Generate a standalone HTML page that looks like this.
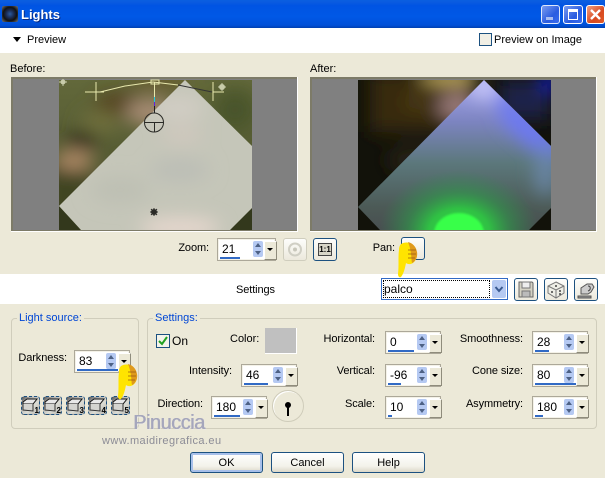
<!DOCTYPE html>
<html><head><meta charset="utf-8"><style>
html,body{margin:0;padding:0;width:605px;height:478px;overflow:hidden;background:#ece9d8;font-family:"Liberation Sans",sans-serif;font-size:11px;color:#000}
div,span,svg{position:absolute;box-sizing:border-box}
.t{white-space:nowrap;line-height:13px}
.r{text-align:right;white-space:nowrap;line-height:13px;letter-spacing:-.1px}
.sp{width:56px;height:23px;background:#fff;border:1px solid #aca899;box-shadow:inset 0 0 0 1px #f4f2e8}
.sp b{position:absolute;left:4px;top:3px;font-weight:normal;font-size:12px;line-height:14px}
.sp i{position:absolute;display:block;left:2px;bottom:1px;height:2px;background:#316ac5}
.sp u{position:absolute;display:block;left:31px;top:2px;width:10px;height:16px;background:#b5c9f2;border-radius:2px}
.sp u:before{content:"";position:absolute;left:2px;top:2px;border:3px solid transparent;border-top:0;border-bottom:4px solid #4d6185}
.sp u:after{content:"";position:absolute;left:2px;top:10px;border:3px solid transparent;border-bottom:0;border-top:4px solid #4d6185}
.sp s{position:absolute;display:block;left:43px;top:2px;width:11px;height:17px;background:#ece9d8;border-right:1px solid #8f8c7c;border-bottom:1px solid #8f8c7c;border-top:1px solid #fff;border-left:1px solid #fff}
.sp s:after{content:"";position:absolute;left:2px;top:6px;border:3px solid transparent;border-bottom:0;border-top:3px solid #000}
.btn{height:21px;border:1px solid #1c5180;border-radius:3px;background:linear-gradient(#fff,#f3f2ea 70%,#dcd8c8);text-align:center;line-height:20px;font-size:11px}
.ib{width:24px;height:23px;border:1px solid #1c5180;border-radius:3px;background:linear-gradient(#fdfdfb,#ece9dc)}
.grp{border:1px solid #d0cdbc;border-radius:4px}
.leg{color:#0046d5;background:#ece9d8;padding:0 2px;line-height:13px;white-space:nowrap}
.ls{width:19px;height:19px;border:1px dashed #1c5180;border-radius:3px;background:linear-gradient(135deg,#555 0,#aaa 25%,#dcdcd4 60%,#b4b4b0 100%)}
.ls b{position:absolute;right:0;bottom:-1px;font-size:8px;line-height:9px;color:#000}
.ls svg{left:0;top:0}
</style></head><body>

<div style="left:0;top:0;width:605px;height:28px;background:linear-gradient(#0a5fe0 0,#0a5ae0 8%,#0054e3 20%,#0058e6 60%,#0050d8 90%,#0040b0 100%)"></div>
<div style="left:2px;top:6px;width:16px;height:16px;background:radial-gradient(circle at 50% 50%,#2a5aa0 0,#1a2a50 35%,#111 60%,#777 100%);border-radius:2px"></div>
<div class="t" style="left:21px;top:7px;color:#fff;font-weight:bold;font-size:13px;line-height:16px;text-shadow:1px 1px 0 #0a2a80">Lights</div>
<div style="left:541px;top:5px;width:19px;height:19px;border:1px solid #dfe8fb;border-radius:3px;background:linear-gradient(135deg,#7b9cf0,#2a5ce0 60%,#3a6cf0)"><div style="left:4px;top:11px;width:7px;height:3px;background:#a9bdf0"></div></div>
<div style="left:563px;top:5px;width:20px;height:19px;border:1px solid #fff;border-radius:3px;background:linear-gradient(135deg,#7b9cf0,#2a5ce0 60%,#3a6cf0)"><div style="left:4px;top:3px;width:10px;height:11px;border:1px solid #fff;border-top:3px solid #fff"></div></div>
<div style="left:586px;top:5px;width:19px;height:19px;border:1px solid #fff;border-radius:3px;background:linear-gradient(135deg,#f0a080,#d84a20 60%,#e05a28)"><svg width="17" height="17" style="left:0;top:0"><path d="M4 4L13 13M13 4L4 13" stroke="#fff" stroke-width="2.4"/></svg></div>

<div style="left:0;top:28px;width:605px;height:25px;background:#fff"></div>
<div style="left:13px;top:37px;border:4.5px solid transparent;border-bottom:0;border-top:5px solid #000"></div>
<div class="t" style="left:27px;top:34px">Preview</div>
<div style="left:479px;top:33px;width:13px;height:13px;border:1px solid #1c5180;background:#f1efe5"></div>
<div class="t" style="left:494px;top:34px">Preview on Image</div>

<div class="t" style="left:10px;top:63px">Before:</div>
<div class="t" style="left:310px;top:63px">After:</div>

<svg width="605" height="240" style="left:0;top:0" viewBox="0 0 605 240">
<defs>
<filter id="b1" x="-60%" y="-60%" width="220%" height="220%"><feGaussianBlur stdDeviation="9"/></filter>
<filter id="b3" x="-20%" y="-20%" width="140%" height="140%"><feGaussianBlur stdDeviation="1"/></filter>
<clipPath id="c1"><rect x="59" y="80" width="193" height="150"/></clipPath>
<clipPath id="c2"><rect x="358" y="80" width="193" height="150"/></clipPath>
<clipPath id="d1"><path d="M185 80L252 146V208L230 230H81L59 206Z"/></clipPath>
<clipPath id="d2"><path d="M484 80L551 146V208L529 230H380L358 207Z"/></clipPath>
<linearGradient id="g1" x1="0" y1="0" x2="0" y2="1"><stop offset="0" stop-color="#62683a"/><stop offset="1" stop-color="#484e2c"/></linearGradient>
<linearGradient id="g2" gradientUnits="userSpaceOnUse" x1="0" y1="80" x2="0" y2="230"><stop offset="0" stop-color="#a8a8f0"/><stop offset=".28" stop-color="#7c84c0"/><stop offset=".55" stop-color="#5c787c"/><stop offset=".85" stop-color="#4c5a56"/><stop offset="1" stop-color="#484e50"/></linearGradient>
<radialGradient id="gr" gradientUnits="userSpaceOnUse" cx="0" cy="0" r="1" gradientTransform="translate(459 232) scale(80 62)"><stop offset="0" stop-color="#33e045"/><stop offset=".38" stop-color="#30c044"/><stop offset=".65" stop-color="#2f9a4a" stop-opacity=".6"/><stop offset="1" stop-color="#2f8a50" stop-opacity="0"/></radialGradient>
</defs>
<rect x="11" y="77" width="287" height="155" fill="#fff"/>
<rect x="11" y="77" width="286" height="154" fill="#7d7b68"/>
<rect x="13" y="79" width="284" height="151" fill="#808080"/>
<rect x="310" y="77" width="287" height="155" fill="#fff"/>
<rect x="310" y="77" width="286" height="154" fill="#7d7b68"/>
<rect x="312" y="79" width="284" height="151" fill="#808080"/>

<g clip-path="url(#c1)">
<rect x="59" y="80" width="193" height="150" fill="url(#g1)"/>
<g filter="url(#b1)">
<ellipse cx="68" cy="195" rx="25" ry="35" fill="#3f4424"/>
<ellipse cx="120" cy="104" rx="26" ry="11" fill="#54401c"/>
<ellipse cx="150" cy="112" rx="24" ry="14" fill="#a88c74"/>
<ellipse cx="160" cy="82" rx="30" ry="7" fill="#6a5a2a"/>
<ellipse cx="82" cy="141" rx="16" ry="9" fill="#2a2616"/>
<ellipse cx="74" cy="160" rx="20" ry="9" fill="#b8906c"/>
<ellipse cx="100" cy="122" rx="20" ry="12" fill="#70703c"/>
<ellipse cx="235" cy="110" rx="22" ry="22" fill="#48542c"/>
</g>
<path d="M59 206V230H81Z" fill="#33381c"/>
<path d="M252 208V230H230Z" fill="#33381c"/>
<path d="M185 80L252 146V208L230 230H81L59 206Z" fill="#c5c6b9"/>
<g clip-path="url(#d1)"><g filter="url(#b1)">
<ellipse cx="178" cy="108" rx="26" ry="12" fill="#d2cdc4"/>
<ellipse cx="182" cy="135" rx="20" ry="9" fill="#d0c8be"/>
<ellipse cx="180" cy="170" rx="30" ry="12" fill="#bcbeb6"/>
<ellipse cx="120" cy="190" rx="30" ry="14" fill="#bec0b4"/>
<ellipse cx="180" cy="228" rx="40" ry="10" fill="#e8d8cf"/>
</g></g>
</g>

<g clip-path="url(#c2)">
<rect x="358" y="80" width="193" height="150" fill="#12120a"/>
<g filter="url(#b1)">
<rect x="370" y="72" width="105" height="60" fill="#382a0c"/>
<ellipse cx="450" cy="76" rx="30" ry="7" fill="#d0b868"/>
<ellipse cx="458" cy="106" rx="20" ry="14" fill="#9a7a78"/>
<ellipse cx="418" cy="102" rx="14" ry="9" fill="#4c3a12"/>
<ellipse cx="415" cy="160" rx="28" ry="14" fill="#282014"/>
<rect x="500" y="80" width="50" height="40" fill="#1c2448"/>
<ellipse cx="551" cy="82" rx="9" ry="9" fill="#0a1ad0"/>
</g>
<path d="M484 80L551 146V208L529 230H380L358 207Z" fill="url(#g2)"/>
<g clip-path="url(#d2)">
<g filter="url(#b1)">
<path d="M490 80L565 146L550 165L505 125Z" fill="#6c78f4"/>
<ellipse cx="484" cy="88" rx="14" ry="8" fill="#d4d4fc"/>
<ellipse cx="545" cy="170" rx="10" ry="26" fill="#6a86a8"/>
</g>
<ellipse cx="459" cy="232" rx="80" ry="62" fill="url(#gr)"/>
<g filter="url(#b3)"><ellipse cx="459" cy="234" rx="25" ry="21" fill="#38ff48"/></g>
</g>
</g>

<!-- light controls -->
<g fill="none" stroke="#e8e8ae" stroke-width="1">
<path d="M85 92H104M96 82V101M213 92H224M213 82V101"/>
<path d="M100 92L125 86L153 82L178 85"/>
<path d="M151 80H159V84H151Z"/>
<path d="M154.500 82V97"/>
</g>
<path d="M178 85L212 92" stroke="#333" fill="none"/>
<path d="M154.500 97V102" stroke="#20d0e0"/>
<path d="M154.500 102V106" stroke="#6020e0"/>
<path d="M154.500 106V113" stroke="#222"/>
<g fill="none" stroke="#2a2a26"><circle cx="154" cy="122.500" r="9.500"/><path d="M145 122.500H164M154.500 122.500V132"/></g>
<g fill="#2a2a26"><circle cx="154" cy="212" r="3"/><path d="M150 212H158M154 208V216M151 209L157 215M157 209L151 215" stroke="#2a2a26"/></g>
<g fill="#c8ccaa"><circle cx="222" cy="87" r="3"/><path d="M218 87H226M222 83V91" stroke="#c8ccaa"/></g>
<g fill="#c8ccaa"><circle cx="63" cy="82" r="2.500"/><path d="M59 82H67M63 79V86" stroke="#c8ccaa"/></g>
</svg>

<!-- zoom row -->
<div class="r" style="left:170px;width:39px;top:242px">Zoom:</div>
<div class="sp" style="left:217px;top:238px;width:59px"><b>21</b><i style="width:20px"></i><u style="left:35px"></u><s style="left:46px"></s></div>
<div class="ib" style="left:283px;top:238px;border-color:#cfcdbd"><svg width="22" height="21" style="left:0;top:0"><circle cx="11" cy="10.500" r="6" fill="none" stroke="#d0cfc4" stroke-width="2"/><circle cx="11" cy="10.500" r="2" fill="#c8c7bb"/></svg></div>
<div class="ib" style="left:313px;top:238px"><div style="left:4px;top:4px;width:14px;height:13px;background:#d8d6c8;border:1px solid #444;font-size:8px;font-weight:bold;line-height:11px;text-align:center">1:1</div></div>
<div class="r" style="left:360px;width:35px;top:242px">Pan:</div>
<div class="ib" style="left:401px;top:237px"></div>

<!-- settings band -->
<div style="left:0;top:274px;width:605px;height:30px;background:#fff"></div>
<div class="t" style="left:236px;top:284px;letter-spacing:-.1px">Settings</div>
<div style="left:381px;top:278px;width:127px;height:22px;border:1px solid #316ac5;background:#fff"><div style="left:1px;top:1px;width:107px;height:18px;border:1px dotted #000"></div><div class="t" style="left:2px;top:4px;font-size:12px">palco</div><div style="left:110px;top:1px;width:14px;height:18px;background:#b5c9f2;border-radius:2px"><svg width="14" height="18" style="left:0;top:0"><path d="M3.500 7L7 11L10.500 7" fill="none" stroke="#3a5a90" stroke-width="2"/></svg></div></div>
<div class="ib" style="left:514px;top:278px"><svg width="22" height="21" style="left:0;top:0"><path d="M4 3H17L18 4V18H4Z" fill="#d4d2c4" stroke="#666"/><path d="M7 3H15V9H7Z" fill="#eee" stroke="#777"/><path d="M7 12H15V18H7Z" fill="#bbb" stroke="#777"/></svg></div>
<div class="ib" style="left:544px;top:278px"><svg width="22" height="21" style="left:0;top:0"><path d="M11 3L19 7V14L11 19L3 14V7Z" fill="#eeeee6" stroke="#777"/><path d="M3 7L11 11L19 7M11 11V19" fill="none" stroke="#777"/><circle cx="11" cy="7" r="1" fill="#444"/><circle cx="7" cy="13" r="1" fill="#444"/><circle cx="15" cy="12" r="1" fill="#444"/><circle cx="15" cy="15" r="1" fill="#444"/></svg></div>
<div class="ib" style="left:574px;top:278px"><svg width="22" height="21" style="left:0;top:0"><path d="M3 17H16V19H3Z" fill="#999" stroke="#555"/><path d="M6 15V9L12 5H17L19 8L16 13L13 15Z" fill="#ccc" stroke="#555"/><path d="M13 7C16 7 16 11 13 12" fill="none" stroke="#444"/></svg></div>

<!-- group boxes -->
<div class="grp" style="left:11px;top:318px;width:128px;height:111px"></div>
<div class="leg" style="left:17px;top:312px">Light source:</div>
<div class="grp" style="left:147px;top:318px;width:450px;height:111px"></div>
<div class="leg" style="left:153px;top:312px">Settings:</div>

<div class="r" style="left:10px;width:57px;top:352px">Darkness:</div>
<div class="sp" style="left:74px;top:350px"><b>83</b><i style="width:44px"></i><u></u><s></s></div>

<div class="ls" style="left:21px;top:396px"><svg width="17" height="17"><path d="M1 5L5 2H15L11 7H1Z" fill="#e8e8e8" stroke="#111"/><path d="M1 7V13L11 14V7" fill="#d4d4d0" stroke="#333"/></svg><b>1</b></div>
<div class="ls" style="left:43px;top:396px"><svg width="17" height="17"><path d="M1 5L5 2H15L11 7H1Z" fill="#e8e8e8" stroke="#111"/><path d="M1 7V13L11 14V7" fill="#d4d4d0" stroke="#333"/></svg><b>2</b></div>
<div class="ls" style="left:66px;top:396px"><svg width="17" height="17"><path d="M1 5L5 2H15L11 7H1Z" fill="#e8e8e8" stroke="#111"/><path d="M1 7V13L11 14V7" fill="#d4d4d0" stroke="#333"/></svg><b>3</b></div>
<div class="ls" style="left:88px;top:396px"><svg width="17" height="17"><path d="M1 5L5 2H15L11 7H1Z" fill="#e8e8e8" stroke="#111"/><path d="M1 7V13L11 14V7" fill="#d4d4d0" stroke="#333"/></svg><b>4</b></div>
<div class="ls" style="left:111px;top:396px"><svg width="17" height="17"><path d="M1 5L5 2H15L11 7H1Z" fill="#e8e8e8" stroke="#111"/><path d="M1 7V13L11 14V7" fill="#d4d4d0" stroke="#333"/></svg><b>5</b></div>

<div style="left:156px;top:334px;width:14px;height:14px;border:1px solid #1c5180;background:#f4f3ea"><svg width="12" height="12" style="left:0;top:0"><path d="M2 6L5 9L10 2" fill="none" stroke="#21a121" stroke-width="2"/></svg></div>
<div class="t" style="left:172px;top:335px;font-size:12px">On</div>
<div class="t" style="left:230px;top:333px">Color:</div>
<div style="left:265px;top:328px;width:32px;height:26px;background:#c0c0c0;border-right:1px solid #fff;border-bottom:1px solid #fff"></div>

<div class="r" style="left:170px;width:62px;top:365px">Intensity:</div>
<div class="sp" style="left:241px;top:364px"><b>46</b><i style="width:24px"></i><u></u><s></s></div>
<div class="r" style="left:150px;width:53px;top:398px">Direction:</div>
<div class="sp" style="left:211px;top:396px"><b>180</b><i style="width:26px"></i><u></u><s></s></div>
<div style="left:272px;top:390px;width:32px;height:32px;border-radius:50%;border:1px solid #cfccba;background:#ece9d8;box-shadow:inset 1px 1px 0 #fff"><svg width="30" height="30" style="left:0;top:0"><circle cx="15" cy="14" r="3" fill="#000"/><path d="M15 14V25" stroke="#000" stroke-width="2"/></svg></div>

<div class="r" style="left:310px;width:65px;top:333px">Horizontal:</div>
<div class="sp" style="left:385px;top:331px"><b>0</b><i style="width:26px"></i><u></u><s></s></div>
<div class="r" style="left:310px;width:65px;top:365px">Vertical:</div>
<div class="sp" style="left:385px;top:364px"><b>-96</b><i style="width:13px"></i><u></u><s></s></div>
<div class="r" style="left:310px;width:65px;top:398px">Scale:</div>
<div class="sp" style="left:385px;top:396px"><b>10</b><i style="width:4px"></i><u></u><s></s></div>

<div class="r" style="left:440px;width:83px;top:333px">Smoothness:</div>
<div class="sp" style="left:532px;top:331px"><b>28</b><i style="width:14px"></i><u></u><s></s></div>
<div class="r" style="left:440px;width:83px;top:365px">Cone size:</div>
<div class="sp" style="left:532px;top:364px"><b>80</b><i style="width:48px"></i><u></u><s></s></div>
<div class="r" style="left:440px;width:83px;top:398px">Asymmetry:</div>
<div class="sp" style="left:532px;top:396px"><b>180</b><i style="width:8px"></i><u></u><s></s></div>

<div class="btn" style="left:190px;top:452px;width:73px;box-shadow:inset 0 0 0 2px #a8c0ea">OK</div>
<div class="btn" style="left:271px;top:452px;width:73px">Cancel</div>
<div class="btn" style="left:352px;top:452px;width:73px">Help</div>

<!-- watermark -->
<div class="t" style="left:133px;top:412px;font-size:20px;line-height:22px;letter-spacing:-.5px;color:#a5a6bc;text-shadow:.5px 0 0 #a5a6bc,1px 1px 0 #eceae2">Pinuccia</div>
<div class="t" style="left:102px;top:435px;font-size:11px;letter-spacing:.42px;color:#8c8c96">www.maidiregrafica.eu</div>

<!-- hands -->
<svg width="605" height="478" style="left:0;top:0">
<defs>
<g id="hand">
<path d="M3 2C6 0 11 0 14 2L18 8C20 13 19 18 15 21C12 23 9 22 8 21C7 26 6 31 3 35C1 36 0 34 0 32C1 24 0 14 1 8C1 5 2 3 3 2Z" fill="#ffe400"/>
<path d="M10 0C14 1 18 4 19 10C20 15 17 20 14 21C13 17 14 10 10 0Z" fill="#df9a1c"/>
<path d="M10 8H18M10 12H18M10 16H17" stroke="#9a5a10" stroke-width=".7"/>
</g>
</defs>
<use href="#hand" transform="translate(398 242)"/>
<use href="#hand" transform="translate(118 364)"/>
</svg>
</body></html>
